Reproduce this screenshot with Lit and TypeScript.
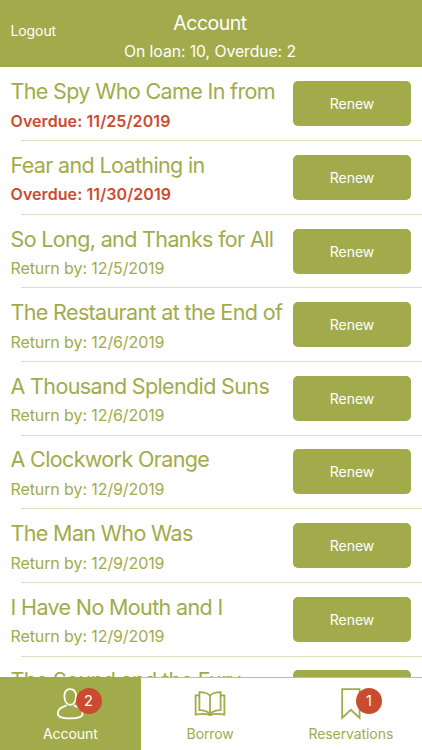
import { LitElement, html, css, svg } from "lit";
import { customElement, property } from "lit/decorators.js";
import { classMap } from "lit/directives/class-map.js";

interface Loan {
  title: string;
  date: string;
  overdue?: boolean;
}

const loans: Loan[] = [
  { title: "The Spy Who Came In from", date: "11/25/2019", overdue: true },
  { title: "Fear and Loathing in", date: "11/30/2019", overdue: true },
  { title: "So Long, and Thanks for All", date: "12/5/2019" },
  { title: "The Restaurant at the End of", date: "12/6/2019" },
  { title: "A Thousand Splendid Suns", date: "12/6/2019" },
  { title: "A Clockwork Orange", date: "12/9/2019" },
  { title: "The Man Who Was", date: "12/9/2019" },
  { title: "I Have No Mouth and I", date: "12/9/2019" },
  { title: "The Sound and the Fury", date: "12/9/2019" },
];

@customElement("loan-row")
export class LoanRow extends LitElement {
  @property({ attribute: false }) loan!: Loan;

  static styles = css`
    :host {
      display: flex;
      box-sizing: border-box;
      height: 73.67px;
      flex: none;
      position: relative;
      padding: 14.2px 11px 0 10.5px;
      justify-content: space-between;
      align-items: flex-start;
    }
    :host::after {
      content: "";
      position: absolute;
      left: 21px;
      right: 0;
      bottom: -0.4px;
      height: 1px;
      background: #dce0bf;
    }
    .text {
      width: 280px;
      margin-top: -5px;
      white-space: nowrap;
      color: #a1ab4b;
    }
    .title {
      font-size: 21.5px;
      line-height: 30px;
      letter-spacing: -0.64px;
    }
    .due {
      font-size: 16px;
      line-height: 22px;
      margin-top: 3.4px;
      letter-spacing: -0.1px;
    }
    .overdue {
      color: #cb4b2f;
      font-weight: 600;
      letter-spacing: 0.08px;
    }
    .renew {
      width: 118px;
      height: 45px;
      border: 0;
      border-radius: 5px;
      padding: 0;
      background: #a1ab4b;
      color: #fff;
      font: inherit;
      font-size: 14px;
      flex: none;
    }
  `;

  render() {
    const { title, date, overdue } = this.loan;
    return html`
      <div class="text">
        <div class="title">${title}</div>
        <div class=${classMap({ due: true, overdue: !!overdue })}>
          ${overdue ? "Overdue" : "Return by"}: ${date}
        </div>
      </div>
      <button class="renew">Renew</button>
    `;
  }
}

const person = svg`
  <path d="M15.2 2.1C19.2 2.1 21.2 5.2 21 9.2C20.8 14 18.7 17.8 15.2 17.8C11.7 17.8 9.5 14 9.4 9.2C9.2 5.2 11.2 2.1 15.2 2.1Z" />
  <path d="M11.6 18.2C9.6 20.4 2.8 19.6 2.8 26.8C2.8 29.9 6.8 31.4 15.2 31.4C23.6 31.4 27.6 29.9 27.6 26.8C27.6 19.6 20.8 20.4 18.8 18.2" />`;
const book = svg`
  <path d="M15 8.6C13 6.2 9.4 5.1 4.4 5.1V23.2C9.4 23.2 13 24.6 15 27.4C17 24.6 20.6 23.2 25.6 23.2V5.1C20.6 5.1 17 6.2 15 8.6Z" />
  <path d="M15 8.6V27.4" />
  <path d="M4.2 8.4H.6V27.6C6.5 26.6 11.5 26.6 15 28.2C18.5 26.6 23.5 26.6 29.4 27.6V8.4H25.8" />`;
const bookmark = svg`<path d="M6.2 2.1H23.6V31L14.9 22.8L6.2 31Z" />`;

@customElement("app-root")
export class AppRoot extends LitElement {
  static styles = css`
    :host {
      display: flex;
      flex-direction: column;
      height: 750px;
      width: 422px;
      overflow: hidden;
      background: #fff;
      font-family: Inter, "Liberation Sans", sans-serif;
    }
    header {
      height: 67px;
      flex: none;
      display: grid;
      grid-template-columns: 90px 1fr 92px;
      align-items: center;
      background: #a1ab4b;
      color: #fff;
    }
    .logout {
      padding-left: 10.5px;
      font-size: 14px;
      letter-spacing: -0.1px;
      margin-top: -6px;
    }
    .heading {
      text-align: center;
      white-space: nowrap;
      margin-top: 5px;
    }
    .name {
      font-size: 19.5px;
      line-height: 26px;
      letter-spacing: -0.5px;
    }
    .summary {
      font-size: 15.8px;
      line-height: 22px;
      margin-top: 5px;
      letter-spacing: -0.08px;
    }
    main {
      flex: 1;
      min-height: 0;
      overflow: hidden;
      display: flex;
      flex-direction: column;
    }
    nav {
      height: 73px;
      box-sizing: border-box;
      flex: none;
      display: grid;
      grid-template-columns: 140.67px 139px 1fr;
      border-top: 1.5px solid #bcc580;
    }
    .tab {
      display: flex;
      flex-direction: column;
      align-items: center;
      color: #a1ab4b;
      font-size: 14px;
    }
    .active {
      background: #a1ab4b;
      color: #fff;
      margin-top: -1px;
      padding-top: 1px;
    }
    .icon {
      position: relative;
      width: 30px;
      height: 33px;
      margin-top: 9px;
    }
    svg {
      display: block;
      width: 30px;
      height: 33px;
      overflow: visible;
      fill: none;
      stroke: currentColor;
      stroke-width: 1.8;
    }
    .badge {
      position: absolute;
      left: 20.2px;
      top: 0.5px;
      width: 26px;
      height: 26px;
      border-radius: 50%;
      background: #cb4b2f;
      color: #fff;
      font-size: 14.5px;
      line-height: 26px;
      text-align: center;
    }
    .label {
      line-height: 18px;
      margin-top: 5px;
      letter-spacing: -0.08px;
    }
  `;

  private tab(label: string, icon: unknown, badge?: number, active = false) {
    return html`
      <div class=${classMap({ tab: true, active })}>
        <div class="icon">
          <svg viewBox="0 0 30 33">${icon}</svg>
          ${badge ? html`<span class="badge">${badge}</span>` : null}
        </div>
        <div class="label">${label}</div>
      </div>
    `;
  }

  render() {
    const overdue = loans.filter((l) => l.overdue).length;
    return html`
      <header>
        <div class="logout">Logout</div>
        <div class="heading">
          <div class="name">Account</div>
          <div class="summary">On loan: 10, Overdue: ${overdue}</div>
        </div>
      </header>
      <main>${loans.map((l) => html`<loan-row .loan=${l}></loan-row>`)}</main>
      <nav>
        ${this.tab("Account", person, 2, true)}
        ${this.tab("Borrow", book)}
        ${this.tab("Reservations", bookmark, 1)}
      </nav>
    `;
  }
}
